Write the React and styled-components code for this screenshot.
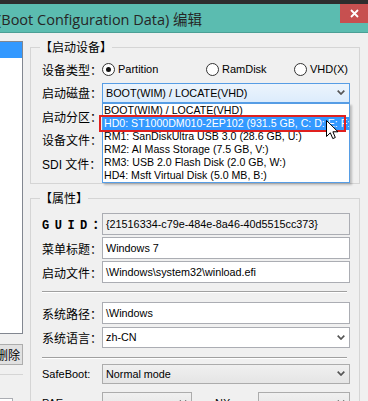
import React from "react";
import styled, { createGlobalStyle, css } from "styled-components";

const GlobalStyle = createGlobalStyle`
  html, body {
    margin: 0;
    padding: 0;
  }
  body {
    background: #f0f0f0;
    font-family: "Liberation Sans", "Noto Sans CJK SC", sans-serif;
    color: #000;
  }
`;

const Window = styled.div`
  width: 368px;
  height: 401px;
  overflow: hidden;
  display: flex;
  flex-direction: column;
  background: #f0f0f0;
`;

const TitleBar = styled.div`
  flex: none;
  height: 28px;
  border-top: 4px solid #2d2d2d;
  border-bottom: 1px solid #4b9f95;
  background: #5bbcb0;
  display: flex;
  align-items: center;
  justify-content: space-between;
`;

const TitleText = styled.div`
  margin-left: -3px;
  font-family: "Open Sans", "Noto Sans CJK SC", sans-serif;
  font-size: 14.5px;
  color: #262626;
  white-space: nowrap;
`;

const CloseButton = styled.div`
  align-self: flex-start;
  width: 28px;
  height: 19px;
  background: #c75050;
  display: flex;
  align-items: center;
  justify-content: center;
`;

const Body = styled.div`
  flex: 1;
  min-height: 0;
  display: flex;
`;

const LeftPane = styled.div`
  flex: none;
  width: 90px;
  margin-left: -67px;
  padding-top: 8px;
  display: flex;
  flex-direction: column;
  & > * {
    flex: none;
  }
`;

const ListBox = styled.div`
  height: 293px;
  box-sizing: border-box;
  border: 1px solid #828790;
  background: #fff;
`;

const ListItem = styled.div`
  height: 16px;
  background: ${(p) => (p.selected ? "#3399ff" : "transparent")};
`;

const SideButton = styled.div`
  align-self: flex-end;
  width: 30px;
  height: 21px;
  margin-top: 10px;
  box-sizing: border-box;
  border: 1px solid #adadad;
  background: #e1e1e1;
  font-family: "Noto Sans CJK SC", sans-serif;
  font-size: 12px;
  display: flex;
  align-items: center;
  justify-content: center;
  white-space: nowrap;
`;

const SideGroup = styled.div`
  margin-top: 9px;
  border-top: 1px solid #d5d5d5;
  padding-top: 23px;
  display: flex;
`;

const SideInput = styled.div`
  width: 80px;
  height: 20px;
  box-sizing: border-box;
  border: 1px solid #abadb3;
  background: #fff;
`;

const Main = styled.div`
  flex: none;
  width: 330px;
  margin-left: 7px;
  padding-top: 6px;
  display: flex;
  flex-direction: column;
  gap: 6px;
  & > * {
    flex: none;
  }
`;

const Group = styled.fieldset`
  margin: 0;
  min-width: 0;
  box-sizing: border-box;
  width: 330px;
  border: 1px solid #d5d5d5;
  padding: ${(p) => (p.top ? p.top : 3)}px 9px 9px 11px;
  display: flex;
  flex-direction: column;
  gap: ${(p) => (p.gap ? p.gap : 0)}px;
  & > * {
    flex: none;
  }
`;

const Legend = styled.legend`
  padding: 0;
  margin-left: -2px;
  font-family: "Noto Sans CJK SC", sans-serif;
  font-size: 12px;
  line-height: 16px;
`;

const Row = styled.div`
  position: relative;
  display: grid;
  grid-template-columns: 60px 1fr;
  align-items: center;
  height: ${(p) => (p.h ? p.h : 22)}px;
`;

const Label = styled.div`
  white-space: nowrap;
  font-size: 12px;
  font-family: "Liberation Sans", "Noto Sans CJK SC", sans-serif;
  ${(p) =>
    p.mono &&
    css`
      font-family: "Liberation Mono", "Noto Sans CJK SC", monospace;
      font-weight: bold;
      letter-spacing: 5.5px;
    `}
  ${(p) =>
    p.small &&
    css`
      font-size: 11px;
    `}
`;

const RadioGroup = styled.div`
  display: grid;
  grid-template-columns: 104px 88px 1fr;
  align-items: center;
`;

const Radio = styled.div`
  display: flex;
  align-items: center;
  gap: 3px;
  font-size: 11px;
  white-space: nowrap;
`;

const RadioCircle = styled.span`
  width: 13px;
  height: 13px;
  box-sizing: border-box;
  border-radius: 50%;
  border: 1px solid #333;
  background: #fff;
  display: flex;
  align-items: center;
  justify-content: center;
  &::after {
    content: "";
    width: 5px;
    height: 5px;
    border-radius: 50%;
    background: ${(p) => (p.checked ? "#111" : "transparent")};
  }
`;

const TextBox = styled.div`
  height: 22px;
  box-sizing: border-box;
  border: 1px solid #abadb3;
  background: ${(p) => (p.readOnly ? "#f0f0f0" : "#fff")};
  font-size: 10.8px;
  padding-left: 3px;
  display: flex;
  align-items: center;
  white-space: nowrap;
  overflow: hidden;
`;

const comboVariants = {
  open: css`
    border-color: #569de5;
    background: linear-gradient(#ecf4fc, #dcecfc);
  `,
  list: css`
    border-color: #acacac;
    background: linear-gradient(#f0f0f0, #e5e5e5);
  `,
  edit: css`
    border-color: #abadb3;
    background: #fff;
  `,
};

const Combo = styled.div`
  height: ${(p) => (p.h ? p.h : 21)}px;
  box-sizing: border-box;
  border: 1px solid;
  ${(p) => comboVariants[p.variant || "list"]}
  font-size: 10.8px;
  padding: 0 4px 0 3px;
  display: flex;
  align-items: center;
  justify-content: space-between;
  white-space: nowrap;
  min-width: 0;
`;

const Dropdown = styled.div`
  position: absolute;
  left: 60px;
  right: 0;
  top: 21px;
  box-sizing: border-box;
  border: 1px solid #569de5;
  background: #fff;
  box-shadow: 2px 2px 2px rgba(0, 0, 0, 0.22);
  z-index: 2;
`;

const DropItem = styled.div`
  height: 13px;
  line-height: 13px;
  padding-left: 1px;
  font-size: 10.6px;
  white-space: nowrap;
  overflow: hidden;
  background: ${(p) => (p.active ? "#3399ff" : "transparent")};
  color: ${(p) => (p.active ? "#fff" : "#000")};
`;

const Highlight = styled.div`
  position: absolute;
  left: -4px;
  top: 11px;
  width: 247px;
  height: 17px;
  box-sizing: border-box;
  border: 2px solid #e0201e;
`;

const Pointer = styled.svg`
  position: absolute;
  left: 223px;
  top: 16px;
`;

const Separator = styled.div`
  height: 0;
  border-top: 1px solid #a0a0a0;
  border-bottom: 1px solid #fff;
  margin: ${(p) => p.m};
`;

const SplitRow = styled.div`
  display: flex;
  align-items: center;
  height: 21px;
  margin-top: 6px;
`;

const SplitLabel = styled.div`
  width: ${(p) => p.w}px;
  margin-left: ${(p) => p.ml || 0}px;
  flex: none;
  font-size: 11px;
  white-space: nowrap;
`;

const SplitCombo = styled(Combo)`
  width: ${(p) => (p.w ? `${p.w}px` : "auto")};
  flex: ${(p) => (p.w ? "none" : "1")};
`;

const Chevron = () => (
  <svg width="8" height="5" viewBox="0 0 8 5">
    <polyline points="0.7,0.7 4,4 7.3,0.7" fill="none" stroke="#555" strokeWidth="1.7" />
  </svg>
);

const devices = [
  "BOOT(WIM) / LOCATE(VHD)",
  "HD0: ST1000DM010-2EP102 (931.5 GB, C: D: E: F:",
  "RM1: SanDiskUltra USB 3.0 (28.6 GB, U:)",
  "RM2: AI Mass Storage (7.5 GB, V:)",
  "RM3: USB 2.0 Flash Disk (2.0 GB, W:)",
  "HD4: Msft Virtual Disk (5.0 MB, B:)",
];

export default function App() {
  return (
    <Window>
      <GlobalStyle />
      <TitleBar>
        <TitleText>(Boot Configuration Data) 编辑</TitleText>
        <CloseButton>
          <svg width="9" height="9" viewBox="0 0 9 9">
            <path d="M1 1 L8 8 M8 1 L1 8" stroke="#fff" strokeWidth="1.8" />
          </svg>
        </CloseButton>
      </TitleBar>
      <Body>
        <LeftPane>
          <ListBox>
            <ListItem selected />
          </ListBox>
          <SideButton>删除</SideButton>
          <SideGroup>
            <SideInput />
          </SideGroup>
        </LeftPane>
        <Main>
          <Group gap={1.5}>
            <Legend>【启动设备】</Legend>
            <Row>
              <Label>设备类型：</Label>
              <RadioGroup>
                <Radio>
                  <RadioCircle checked />
                  Partition
                </Radio>
                <Radio>
                  <RadioCircle />
                  RamDisk
                </Radio>
                <Radio>
                  <RadioCircle />
                  VHD(X)
                </Radio>
              </RadioGroup>
            </Row>
            <Row>
              <Label>启动磁盘：</Label>
              <Combo variant="open" h={20}>
                BOOT(WIM) / LOCATE(VHD)
                <Chevron />
              </Combo>
              <Dropdown>
                {devices.map((d, i) => (
                  <DropItem key={d} active={i === 1}>
                    {d}
                  </DropItem>
                ))}
                <Highlight />
                <Pointer width="13" height="20" viewBox="0 0 13 20">
                  <path
                    d="M0.5 0.5 L0.5 16.5 L4.3 12.8 L6.8 18.6 L9.3 17.5 L6.9 11.8 L12 11.8 Z"
                    fill="#fff"
                    stroke="#000"
                    strokeWidth="1"
                  />
                </Pointer>
              </Dropdown>
            </Row>
            <Row>
              <Label>启动分区：</Label>
              <Combo variant="list" />
            </Row>
            <Row>
              <Label>设备文件：</Label>
              <TextBox />
            </Row>
            <Row>
              <Label>SDI 文件：</Label>
              <TextBox />
            </Row>
          </Group>
          <Group top={7} gap={2}>
            <Legend>【属性】</Legend>
            <Row>
              <Label mono>GUID：</Label>
              <TextBox readOnly>{"{21516334-c79e-484e-8a46-40d5515cc373}"}</TextBox>
            </Row>
            <Row>
              <Label>菜单标题：</Label>
              <TextBox>Windows 7</TextBox>
            </Row>
            <Row>
              <Label>启动文件：</Label>
              <TextBox>\Windows\system32\winload.efi</TextBox>
            </Row>
            <Separator m="6px 3px 7px 0" />
            <Row>
              <Label>系统路径：</Label>
              <TextBox>\Windows</TextBox>
            </Row>
            <Row>
              <Label>系统语言：</Label>
              <Combo variant="edit">
                zh-CN
                <Chevron />
              </Combo>
            </Row>
            <Separator m="7px 3px 2px 0" />
            <Row h={21}>
              <Label small>SafeBoot:</Label>
              <Combo variant="list" h={20}>
                Normal mode
                <Chevron />
              </Combo>
            </Row>
            <SplitRow>
              <SplitLabel w={60}>PAE:</SplitLabel>
              <SplitCombo variant="list" w={90}>
                <span />
                <Chevron />
              </SplitCombo>
              <SplitLabel w={43} ml={23}>
                NX:
              </SplitLabel>
              <SplitCombo variant="list">
                <span />
                <Chevron />
              </SplitCombo>
            </SplitRow>
          </Group>
        </Main>
      </Body>
    </Window>
  );
}
